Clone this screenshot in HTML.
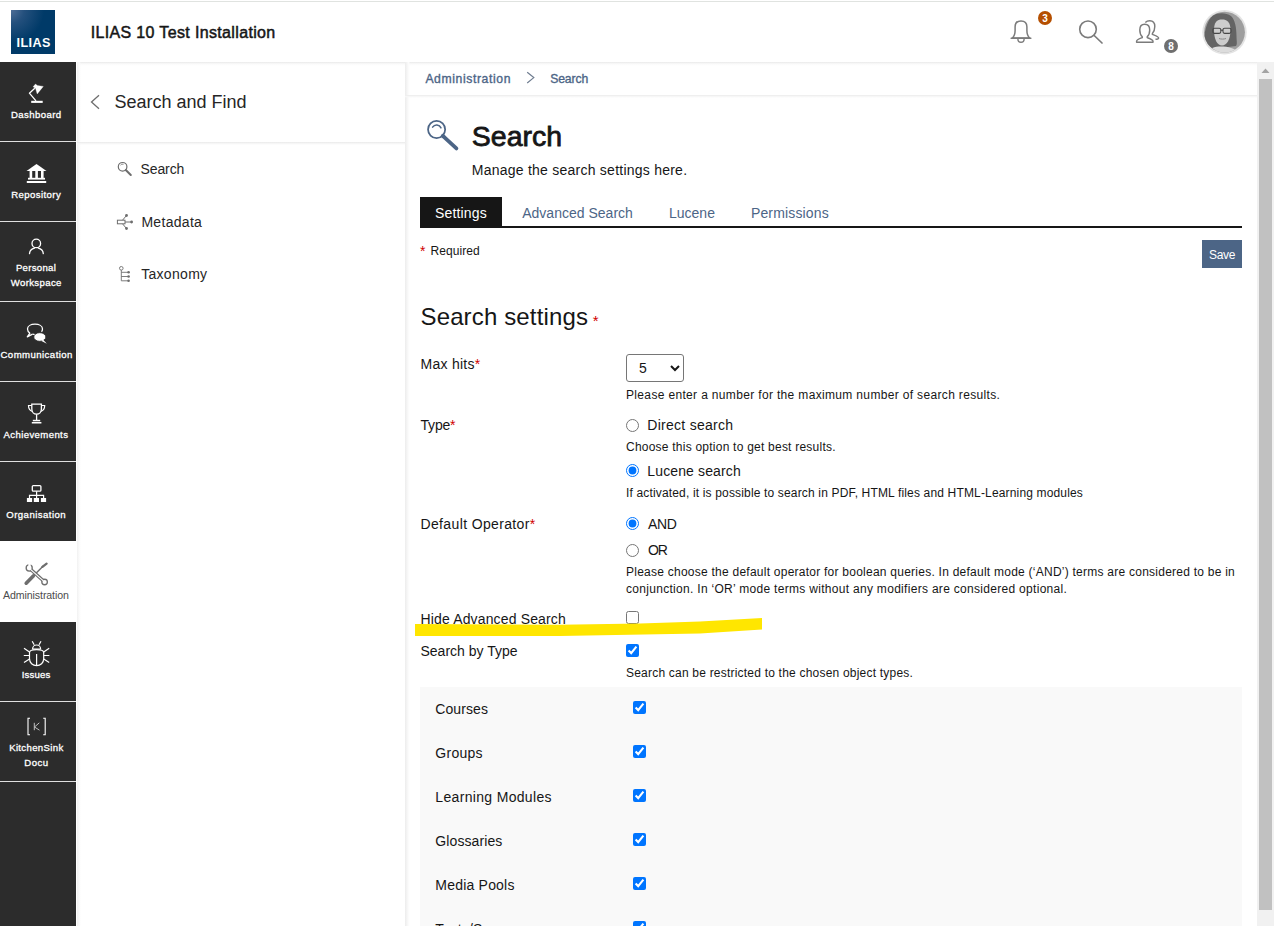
<!DOCTYPE html>
<html><head><meta charset="utf-8"><style>
html,body{margin:0;padding:0;}
body{width:1274px;height:926px;overflow:hidden;position:relative;background:#fff;font-family:"Liberation Sans",sans-serif;}
.t{position:absolute;white-space:nowrap;}
.r{position:absolute;}
svg{position:absolute;overflow:visible;}
input{position:absolute;margin:0;}
</style></head><body>
<div class="r" style="left:0px;top:1px;width:1274px;height:1px;background:#e0e3e0;"></div>
<div class="r" style="left:11px;top:10px;width:44px;height:44px;background:radial-gradient(ellipse 75% 75% at 0 0, #4f6e97 0%, #24507d 40%, #003a68 100%);"></div>
<div class="t" style="left:16.5px;top:34.63px;font-size:12.6px;line-height:16px;color:#ffffff;font-weight:700;letter-spacing:0.45px;">ILIAS</div>
<div class="t" style="left:90.7px;top:21.65px;font-size:16px;line-height:21px;color:#161616;font-weight:400;letter-spacing:0.35px;-webkit-text-stroke:0.5px #161616;">ILIAS 10 Test Installation</div>
<div class="r" style="left:0;top:62px;width:1274px;height:4px;background:linear-gradient(#e9e9e9,#f6f6f6 35%,#fcfcfc 65%,rgba(255,255,255,0))"></div>
<div class="r" style="left:0px;top:62px;width:76px;height:864px;background:#2c2c2c;"></div>
<div class="r" style="left:76px;top:62px;width:1px;height:864px;background:#ffffff;"></div>
<div class="r" style="left:77px;top:62px;width:4px;height:864px;background:linear-gradient(to right,#f1f1f1,#fafafa 50%,rgba(255,255,255,0))"></div>
<div class="r" style="left:0px;top:141px;width:76px;height:1px;background:#e0e0e0;"></div>
<div class="r" style="left:0px;top:221px;width:76px;height:1px;background:#e0e0e0;"></div>
<div class="r" style="left:0px;top:301px;width:76px;height:1px;background:#e0e0e0;"></div>
<div class="r" style="left:0px;top:381px;width:76px;height:1px;background:#e0e0e0;"></div>
<div class="r" style="left:0px;top:461px;width:76px;height:1px;background:#e0e0e0;"></div>
<div class="r" style="left:0px;top:701px;width:76px;height:1px;background:#e0e0e0;"></div>
<div class="r" style="left:0px;top:781px;width:76px;height:1px;background:#e0e0e0;"></div>
<div class="r" style="left:0px;top:541px;width:76px;height:81px;background:#ffffff;"></div>
<div class="r" style="left:77px;top:142px;width:328px;height:3px;background:linear-gradient(#e9e9e9,#f6f6f6 50%,rgba(255,255,255,0))"></div>
<div class="r" style="left:405px;top:62px;width:5px;height:864px;background:linear-gradient(to right,#ececec,#f5f5f5 40%,#fcfcfc 75%,rgba(255,255,255,0))"></div>
<div class="r" style="left:405px;top:95px;width:852px;height:3px;background:linear-gradient(#ebebeb,#f7f7f7 50%,rgba(255,255,255,0))"></div>
<div class="t" style="left:-23.950000000000003px;width:120px;text-align:center;top:109.17px;font-size:9.6px;line-height:12px;color:#ffffff;font-weight:400;letter-spacing:0.39px;-webkit-text-stroke:0.3px #ffffff;text-indent:0.39px;">Dashboard</div>
<div class="t" style="left:-24.049999999999997px;width:120px;text-align:center;top:189.17px;font-size:9.6px;line-height:12px;color:#ffffff;font-weight:400;letter-spacing:0.4px;-webkit-text-stroke:0.3px #ffffff;text-indent:0.4px;">Repository</div>
<div class="t" style="left:-24.15px;width:120px;text-align:center;top:262.17px;font-size:9.6px;line-height:12px;color:#ffffff;font-weight:400;letter-spacing:0.28px;-webkit-text-stroke:0.3px #ffffff;text-indent:0.28px;">Personal</div>
<div class="t" style="left:-23.950000000000003px;width:120px;text-align:center;top:276.77px;font-size:9.6px;line-height:12px;color:#ffffff;font-weight:400;letter-spacing:0.36px;-webkit-text-stroke:0.3px #ffffff;text-indent:0.36px;">Workspace</div>
<div class="t" style="left:-23.549999999999997px;width:120px;text-align:center;top:349.17px;font-size:9.6px;line-height:12px;color:#ffffff;font-weight:400;letter-spacing:0.44px;-webkit-text-stroke:0.3px #ffffff;text-indent:0.44px;">Communication</div>
<div class="t" style="left:-24.25px;width:120px;text-align:center;top:428.97px;font-size:9.6px;line-height:12px;color:#ffffff;font-weight:400;letter-spacing:0.38px;-webkit-text-stroke:0.3px #ffffff;text-indent:0.38px;">Achievements</div>
<div class="t" style="left:-24.049999999999997px;width:120px;text-align:center;top:509.17px;font-size:9.6px;line-height:12px;color:#ffffff;font-weight:400;letter-spacing:0.46px;-webkit-text-stroke:0.3px #ffffff;text-indent:0.46px;">Organisation</div>
<div class="t" style="left:-24.0px;width:120px;text-align:center;top:587.93px;font-size:10.6px;line-height:14px;color:#4c4c4c;font-weight:400;letter-spacing:-0.1px;text-indent:-0.1px;">Administration</div>
<div class="t" style="left:-24.049999999999997px;width:120px;text-align:center;top:668.67px;font-size:9.6px;line-height:12px;color:#ffffff;font-weight:400;letter-spacing:0.16px;-webkit-text-stroke:0.3px #ffffff;text-indent:0.16px;">Issues</div>
<div class="t" style="left:-23.799999999999997px;width:120px;text-align:center;top:742.07px;font-size:9.6px;line-height:12px;color:#ffffff;font-weight:400;letter-spacing:0.34px;-webkit-text-stroke:0.3px #ffffff;text-indent:0.34px;">KitchenSink</div>
<div class="t" style="left:-23.85px;width:120px;text-align:center;top:756.67px;font-size:9.6px;line-height:12px;color:#ffffff;font-weight:400;letter-spacing:0.47px;-webkit-text-stroke:0.3px #ffffff;text-indent:0.47px;">Docu</div>
<div class="t" style="left:114.5px;top:90.86px;font-size:18px;line-height:23px;color:#262626;font-weight:400;letter-spacing:0px;">Search and Find</div>
<div class="t" style="left:140.5px;top:159.85px;font-size:14px;line-height:18px;color:#262626;font-weight:400;letter-spacing:-0.1px;">Search</div>
<div class="t" style="left:141.4px;top:212.85px;font-size:14px;line-height:18px;color:#262626;font-weight:400;letter-spacing:0.3px;">Metadata</div>
<div class="t" style="left:141.2px;top:265.05px;font-size:14px;line-height:18px;color:#262626;font-weight:400;letter-spacing:0.3px;">Taxonomy</div>
<div class="t" style="left:425.4px;top:71.07px;font-size:12.2px;line-height:16px;color:#4c6586;font-weight:400;letter-spacing:0.6px;-webkit-text-stroke:0.35px #4c6586;">Administration</div>
<div class="t" style="left:550.2px;top:71.07px;font-size:12.2px;line-height:16px;color:#4c6586;font-weight:400;letter-spacing:-0.12px;-webkit-text-stroke:0.35px #4c6586;">Search</div>
<div class="t" style="left:471.8px;top:117.82px;font-size:28.5px;line-height:37px;color:#161616;font-weight:400;letter-spacing:0px;-webkit-text-stroke:0.8px #161616;">Search</div>
<div class="t" style="left:471.8px;top:160.85px;font-size:14px;line-height:18px;color:#161616;font-weight:400;letter-spacing:0.24px;">Manage the search settings here.</div>
<div class="r" style="left:420px;top:197px;width:82px;height:31px;background:#161616;"></div>
<div class="r" style="left:420px;top:226px;width:822px;height:2px;background:#161616;"></div>
<div class="t" style="left:435.1px;top:204.45px;font-size:14px;line-height:18px;color:#ffffff;font-weight:400;letter-spacing:0.15px;">Settings</div>
<div class="t" style="left:522.2px;top:204.45px;font-size:14px;line-height:18px;color:#4c6586;font-weight:400;letter-spacing:0.01px;">Advanced Search</div>
<div class="t" style="left:669px;top:204.45px;font-size:14px;line-height:18px;color:#4c6586;font-weight:400;letter-spacing:0px;">Lucene</div>
<div class="t" style="left:750.9px;top:204.45px;font-size:14px;line-height:18px;color:#4c6586;font-weight:400;letter-spacing:0.16px;">Permissions</div>
<div class="t" style="left:420px;top:241.75px;font-size:14px;line-height:18px;color:#d00000;font-weight:400;letter-spacing:0px;">*</div>
<div class="t" style="left:430.4px;top:242.54px;font-size:12px;line-height:16px;color:#161616;font-weight:400;letter-spacing:0.1px;">Required</div>
<div class="r" style="left:1202px;top:240px;width:40px;height:28px;background:#4c6586;"></div>
<div class="t" style="left:1208.9px;top:246.84px;font-size:12px;line-height:16px;color:#ffffff;font-weight:400;letter-spacing:-0.25px;">Save</div>
<div class="t" style="left:420.5px;top:300.88px;font-size:24px;line-height:31px;color:#161616;font-weight:400;letter-spacing:0.14px;">Search settings</div>
<div class="t" style="left:592.8px;top:311.00px;font-size:15px;line-height:20px;color:#d00000;font-weight:400;letter-spacing:0px;">*</div>
<div class="t" style="left:420.5px;top:354.85px;font-size:14px;line-height:18px;color:#161616;font-weight:400;letter-spacing:0.27px;">Max hits<span style="color:#d00000">*</span></div>
<div class="t" style="left:420.5px;top:415.75px;font-size:14px;line-height:18px;color:#161616;font-weight:400;letter-spacing:-0.2px;">Type<span style="color:#d00000">*</span></div>
<div class="t" style="left:420.5px;top:515.35px;font-size:14px;line-height:18px;color:#161616;font-weight:400;letter-spacing:0.36px;">Default Operator<span style="color:#d00000">*</span></div>
<div class="t" style="left:420.5px;top:609.85px;font-size:14px;line-height:18px;color:#161616;font-weight:400;letter-spacing:0.15px;">Hide Advanced Search</div>
<div class="t" style="left:420.5px;top:642.35px;font-size:14px;line-height:18px;color:#161616;font-weight:400;letter-spacing:0px;">Search by Type</div>
<div class="t" style="left:626px;top:386.64px;font-size:12px;line-height:16px;color:#161616;font-weight:400;letter-spacing:0.34px;">Please enter a number for the maximum number of search results.</div>
<div class="t" style="left:647.3px;top:416.45px;font-size:14px;line-height:18px;color:#161616;font-weight:400;letter-spacing:0.28px;">Direct search</div>
<div class="t" style="left:626px;top:439.04px;font-size:12px;line-height:16px;color:#161616;font-weight:400;letter-spacing:0.23px;">Choose this option to get best results.</div>
<div class="t" style="left:647.3px;top:461.95px;font-size:14px;line-height:18px;color:#161616;font-weight:400;letter-spacing:0.13px;">Lucene search</div>
<div class="t" style="left:626px;top:484.74px;font-size:12px;line-height:16px;color:#161616;font-weight:400;letter-spacing:0.16px;">If activated, it is possible to search in PDF, HTML files and HTML-Learning modules</div>
<div class="t" style="left:648px;top:515.25px;font-size:14px;line-height:18px;color:#161616;font-weight:400;letter-spacing:-0.3px;">AND</div>
<div class="t" style="left:648px;top:541.25px;font-size:14px;line-height:18px;color:#161616;font-weight:400;letter-spacing:-1.1px;">OR</div>
<div class="t" style="left:626px;top:564.24px;font-size:12px;line-height:16px;color:#161616;font-weight:400;letter-spacing:0.245px;">Please choose the default operator for boolean queries. In default mode (‘AND’) terms are considered to be in</div>
<div class="t" style="left:626px;top:580.74px;font-size:12px;line-height:16px;color:#161616;font-weight:400;letter-spacing:0.3px;">conjunction. In ‘OR’ mode terms without any modifiers are considered optional.</div>
<div class="t" style="left:626px;top:664.74px;font-size:12px;line-height:16px;color:#161616;font-weight:400;letter-spacing:0.21px;">Search can be restricted to the chosen object types.</div>
<div class="r" style="left:420px;top:687px;width:822px;height:239px;background:#f9f9f9;"></div>
<div class="t" style="left:435.3px;top:700.25px;font-size:14px;line-height:18px;color:#161616;font-weight:400;letter-spacing:0.08px;">Courses</div>
<div class="t" style="left:435.3px;top:744.25px;font-size:14px;line-height:18px;color:#161616;font-weight:400;letter-spacing:0.28px;">Groups</div>
<div class="t" style="left:435.3px;top:788.25px;font-size:14px;line-height:18px;color:#161616;font-weight:400;letter-spacing:0.33px;">Learning Modules</div>
<div class="t" style="left:435.3px;top:832.25px;font-size:14px;line-height:18px;color:#161616;font-weight:400;letter-spacing:0.1px;">Glossaries</div>
<div class="t" style="left:435.3px;top:876.25px;font-size:14px;line-height:18px;color:#161616;font-weight:400;letter-spacing:0.21px;">Media Pools</div>
<div class="t" style="left:435.3px;top:920.25px;font-size:14px;line-height:18px;color:#161616;font-weight:400;letter-spacing:0.2px;">Tests/Surveys</div>
<div class="r" style="left:1257px;top:62px;width:17px;height:864px;background:#f1f1f1;"></div>
<div class="r" style="left:1259px;top:79px;width:13px;height:831px;background:#c1c1c1;"></div>
<select style="position:absolute;left:626px;top:354px;width:58px;height:28px;font-family:'Liberation Sans';font-size:14px;padding-left:8px;color:#161616;border:1px solid #767676;border-radius:3px;background:#fff;"><option>5</option></select>
<input type="radio" style="left:626px;top:418.5px;width:13px;height:13px;" >
<input type="radio" style="left:626px;top:464px;width:13px;height:13px;" checked>
<input type="radio" style="left:626px;top:517px;width:13px;height:13px;" checked>
<input type="radio" style="left:626px;top:544px;width:13px;height:13px;" >
<input type="checkbox" style="left:626px;top:611px;width:13px;height:13px;" >
<input type="checkbox" style="left:626px;top:644px;width:13px;height:13px;" checked>
<input type="checkbox" style="left:633px;top:701px;width:13px;height:13px;" checked>
<input type="checkbox" style="left:633px;top:745px;width:13px;height:13px;" checked>
<input type="checkbox" style="left:633px;top:789px;width:13px;height:13px;" checked>
<input type="checkbox" style="left:633px;top:833px;width:13px;height:13px;" checked>
<input type="checkbox" style="left:633px;top:877px;width:13px;height:13px;" checked>
<input type="checkbox" style="left:633px;top:921px;width:13px;height:13px;" checked>
<svg width="1274" height="926" style="left:0;top:0;pointer-events:none" viewBox="0 0 1274 926"><path d="M1012.3,38 C1014.6,36 1015.1,33.5 1015.1,30.5 L1015.1,26.8 C1015.1,23 1017.6,20.9 1021,20.9 C1024.4,20.9 1026.9,23 1026.9,26.8 L1026.9,30.5 C1026.9,33.5 1027.4,36 1029.7,38 Z" fill="none" stroke="#7b7b7b" stroke-width="1.5" stroke-linejoin="round"/><path d="M1011.2,38.3 L1030.8,38.3" stroke="#7b7b7b" stroke-width="1.6" stroke-linecap="round"/><path d="M1017.9,39 A3.1,3.3 0 0 0 1024.1,39" fill="none" stroke="#7b7b7b" stroke-width="1.4"/><circle cx="1045" cy="18" r="7" fill="#b54f00"/><text x="1045" y="21.8" text-anchor="middle" font-family="Liberation Sans" font-weight="700" font-size="10" fill="#fff">3</text><circle cx="1088" cy="29.3" r="8.3" fill="none" stroke="#7b7b7b" stroke-width="1.6"/><path d="M1094.2,35.5 L1102,43" stroke="#7b7b7b" stroke-width="1.7" stroke-linecap="round"/><path d="M1145.3,22.4 C1146.5,21.2 1148.3,20.7 1149.8,20.7 C1152.8,20.7 1154.8,22.8 1154.8,26.5 C1154.8,29.8 1153.8,32 1152.4,33.5 L1152.4,34.4 C1155,35.4 1158.6,36.4 1158.6,38.1 C1158.6,39.1 1157.5,39.3 1155.4,39.1" fill="none" stroke="#7b7b7b" stroke-width="1.45" stroke-linejoin="round"/><path d="M1144.7,24.3 C1141.8,24.3 1139.8,26.5 1139.8,30 C1139.8,33 1140.6,35.3 1142.3,36.8 L1142.3,37.6 C1139.5,38.7 1136.7,39.6 1136.6,41.2 L1136.6,42.2 L1153,42.2 L1153,41.2 C1152.9,39.6 1150,38.7 1147.2,37.6 L1147.2,36.8 C1148.9,35.3 1149.7,33 1149.7,30 C1149.7,26.5 1147.6,24.3 1144.7,24.3 Z" fill="#fff" stroke="#7b7b7b" stroke-width="1.45" stroke-linejoin="round"/><circle cx="1171" cy="46" r="7" fill="#6f6f6f"/><text x="1171" y="49.8" text-anchor="middle" font-family="Liberation Sans" font-weight="700" font-size="10" fill="#fff">8</text><defs><clipPath id="av"><circle cx="1224.5" cy="32.2" r="20.4"/></clipPath></defs><circle cx="1224.5" cy="32.2" r="22.2" fill="#e3e3e3"/><g clip-path="url(#av)"><rect x="1200" y="8" width="50" height="50" fill="#9e9e9e"/><path d="M1204,50 C1203,36 1206,21 1213,15.5 C1218,12.5 1226,12.5 1231,16 C1235,19.5 1236.5,28 1236.5,36 C1236.5,41 1237.5,44 1236,46 L1228,47 L1212,50 Z" fill="#646464"/><path d="M1214,30 C1214,22 1217,19.5 1222,19.5 C1227,19.5 1230.5,22 1230.5,30 C1230.5,39 1227,45.5 1222,45.5 C1217,45.5 1214,39 1214,30 Z" fill="#cdcdcd"/><path d="M1202,58 C1206,49 1213,46.5 1221,46.5 C1230,46.5 1238,49 1244,58 Z" fill="#dcdcdc"/><rect x="1212.8" y="28.2" width="8" height="5.2" rx="1.6" fill="none" stroke="#484848" stroke-width="1.1"/><rect x="1223" y="28.2" width="8" height="5.2" rx="1.6" fill="none" stroke="#484848" stroke-width="1.1"/><path d="M1220.8,30.2 L1223,30.2" stroke="#3a3a3a" stroke-width="1"/><path d="M1219,38.5 C1221,39.3 1224,39.3 1226,38.5" stroke="#8a8a8a" stroke-width="1" fill="none"/></g><path d="M33.1,86.8 L35.5,84 L37.3,85.4 L43.3,86.4 L37.2,94 L35.6,88.6 Z" fill="#ffffff" stroke="#ffffff" stroke-width="0.3" stroke-linejoin="round"/><path d="M34.8,88.3 L29.4,93.2 L36,100.9" fill="none" stroke="#ffffff" stroke-width="1.3" stroke-linejoin="round"/><rect x="31.2" y="100.8" width="11.5" height="2.1" fill="#ffffff"/><path d="M26.5,171 L36.5,164 L46.5,171 Z" fill="#ffffff"/><rect x="29.6" y="171" width="2.6" height="7" fill="#ffffff"/><rect x="35.3" y="171" width="2.6" height="7" fill="#ffffff"/><rect x="41.0" y="171" width="2.6" height="7" fill="#ffffff"/><rect x="28" y="177.8" width="17" height="1.8" fill="#ffffff"/><rect x="26.8" y="181" width="19.4" height="2" fill="#ffffff"/><circle cx="36.3" cy="243.4" r="4.3" fill="none" stroke="#ffffff" stroke-width="1.3"/><path d="M29.5,253.6 C29.8,250.5 31.8,248.8 34.5,248.2 M38.3,248.2 C41,248.8 43,250.5 43.3,253.6" fill="none" stroke="#ffffff" stroke-width="1.3" stroke-linecap="round"/><path d="M30,333.2 C28,332 27.5,330.5 27.5,329 C27.5,326 31,324.2 35,324.2 C39,324.2 42.5,326 42.5,329 C42.5,330 42.2,331 41.5,331.8" fill="none" stroke="#ffffff" stroke-width="1.3"/><path d="M30,333 L27.3,336.8 L32.5,334.2" fill="none" stroke="#ffffff" stroke-width="1.3" stroke-linejoin="round"/><path d="M32.5,334.2 C33.5,334.5 34.5,334.6 35,334.6" fill="none" stroke="#ffffff" stroke-width="1.3"/><ellipse cx="39.8" cy="337" rx="6" ry="4.3" fill="#ffffff" stroke="#2c2c2c" stroke-width="0.8"/><path d="M43,339.5 L46.8,343.8 L41.5,341" fill="#ffffff"/><path d="M31.8,404.2 L41.4,404.2 L41.4,409 C41.4,412 39.3,414.2 36.6,414.2 C33.9,414.2 31.8,412 31.8,409 Z" fill="none" stroke="#ffffff" stroke-width="1.3"/><path d="M31.8,405.5 L28.5,405.5 C28.5,408.5 29.5,410.5 32.5,411.5 M41.4,405.5 L44.7,405.5 C44.7,408.5 43.7,410.5 40.7,411.5" fill="none" stroke="#ffffff" stroke-width="1.2"/><path d="M36.6,414.2 L36.6,420.5" stroke="#ffffff" stroke-width="1.3"/><rect x="32.8" y="419.8" width="7.4" height="1.5" fill="#ffffff"/><rect x="31.8" y="422" width="9.6" height="1.5" fill="#ffffff"/><rect x="32.3" y="485.6" width="8.6" height="5.6" rx="1" fill="none" stroke="#ffffff" stroke-width="1.3"/><path d="M36.6,491.2 L36.6,498 M29.5,498.3 L29.5,495.3 L43.6,495.3 L43.6,498.3" fill="none" stroke="#ffffff" stroke-width="1.2"/><rect x="26.9" y="498" width="5.2" height="4" fill="#ffffff"/><rect x="33.8" y="498" width="5.2" height="4" fill="#ffffff"/><rect x="40.9" y="498" width="5.2" height="4" fill="#ffffff"/><path d="M26.2,583.2 L33.3,576" stroke="#6e6e6e" stroke-width="3.6" stroke-linecap="round"/><path d="M33.3,576 L43.2,566" stroke="#6e6e6e" stroke-width="1.4"/><path d="M42.4,566.8 L46.6,563.6" stroke="#6e6e6e" stroke-width="2.3" stroke-linecap="round"/><path d="M30.5,569.3 L43.3,580.8" stroke="#6e6e6e" stroke-width="3.4"/><circle cx="44.6" cy="582" r="3.4" fill="#6e6e6e"/><circle cx="29.2" cy="568" r="3.7" fill="#6e6e6e"/><circle cx="44.6" cy="582" r="2.1" fill="#fff"/><circle cx="29.2" cy="568" r="2.4" fill="#fff"/><path d="M30.5,569.3 L43.3,580.8" stroke="#fff" stroke-width="1.1"/><path d="M29.4,567.6 L29.6,563" stroke="#fff" stroke-width="2.4"/><path d="M32.6,649 A4,4 0 0 1 40.6,649 Z" fill="none" stroke="#ffffff" stroke-width="1.2"/><path d="M32.2,641.2 L34.2,644.8 M41,641.2 L39,644.8" stroke="#ffffff" stroke-width="1.2"/><path d="M29.5,652.5 C29.5,650.5 32.5,649.6 36.6,649.6 C40.7,649.6 43.7,650.5 43.7,652.5 L43.7,658.5 C43.7,663 40.5,665.6 36.6,665.6 C32.7,665.6 29.5,663 29.5,658.5 Z" fill="none" stroke="#ffffff" stroke-width="1.2"/><path d="M36.6,654 L36.6,665.5" stroke="#ffffff" stroke-width="1.2"/><path d="M29.5,652 L24,648.2 M29.5,655.5 L23.8,655.5 M29.5,659 L24,662.5 M43.7,652 L49.2,648.2 M43.7,655.5 L49.4,655.5 M43.7,659 L49.2,662.5" stroke="#ffffff" stroke-width="1.2"/><path d="M30,718.3 L28,718.3 L28,734.7 L30,734.7 M43.2,718.3 L45.2,718.3 L45.2,734.7 L43.2,734.7" fill="none" stroke="#ffffff" stroke-width="1.1"/><path d="M34.3,722.8 L34.3,730.2 M39.3,722.8 L34.5,727 L39.5,730.2" fill="none" stroke="#cfcfcf" stroke-width="0.9"/><path d="M99,95.2 L91.5,102 L99,108.8" fill="none" stroke="#6e6e6e" stroke-width="1.3"/><circle cx="122.6" cy="166.8" r="4.3" fill="none" stroke="#6e6e6e" stroke-width="1.2"/><path d="M120.5,165.2 A2.5,2.5 0 0 1 123.5,164.3" fill="none" stroke="#6e6e6e" stroke-width="0.8"/><path d="M125.8,170 L130.8,175" stroke="#6e6e6e" stroke-width="2" stroke-linecap="round"/><rect x="117.4" y="220.2" width="7.6" height="3.6" fill="none" stroke="#6e6e6e" stroke-width="1"/><path d="M125,222 L132,222 M122.5,220.2 L126.5,215.5 M122.5,223.8 L126.5,228.5" stroke="#6e6e6e" stroke-width="1"/><circle cx="126.5" cy="215.5" r="1.4" fill="#6e6e6e"/><circle cx="131.6" cy="222" r="1.4" fill="#6e6e6e"/><circle cx="126.5" cy="228.5" r="1.4" fill="#6e6e6e"/><circle cx="121.3" cy="268.3" r="1.8" fill="none" stroke="#6e6e6e" stroke-width="0.9"/><path d="M121.3,270.1 L121.3,280.8 L128.5,280.8 M121.3,272.3 L128.5,272.3 M121.3,276.5 L128.5,276.5" fill="none" stroke="#6e6e6e" stroke-width="0.9"/><circle cx="128.6" cy="272.3" r="1.3" fill="#6e6e6e"/><circle cx="128.6" cy="276.5" r="1.3" fill="#6e6e6e"/><circle cx="128.6" cy="280.8" r="1.3" fill="#6e6e6e"/><path d="M527.2,72.2 L533.8,77.6 L527.2,83" fill="none" stroke="#6f7d90" stroke-width="1.2"/><circle cx="436.6" cy="129.5" r="8.55" fill="none" stroke="#4c6586" stroke-width="1.75"/><path d="M432.6,127.2 A4.8,4.8 0 0 1 441,127.9" fill="none" stroke="#4c6586" stroke-width="1.5" stroke-linecap="round"/><path d="M442.8,135.8 L456.4,148.4" stroke="#4c6586" stroke-width="3.8" stroke-linecap="round"/><path d="M441.6,138.2 L443.5,133.8 L446.5,137.2 Z" fill="#4c6586"/><path d="M415,624 L560,624.8 L640,623.5 L700,621.5 L762,618 L762,629.5 L700,633.5 L560,636 L415,636 Z" fill="#ffe600"/></svg>
<svg width="17" height="17" style="left:1257px;top:62px" viewBox="0 0 17 17"><path d="M4.5,11 L8.5,6.5 L12.5,11 Z" fill="#a3a3a3"/></svg>
</body></html>
